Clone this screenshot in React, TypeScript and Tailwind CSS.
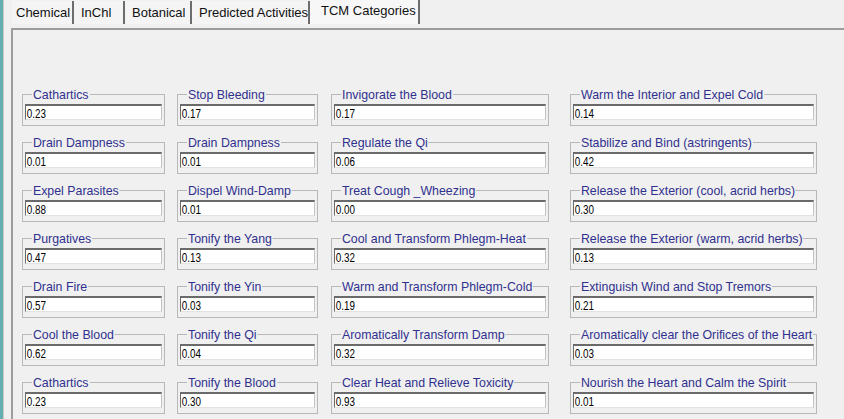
import React from "react";

type Item = { label: string; value: string };

const cols: { w: string; ml: string; items: Item[] }[] = [
  {
    w: "w-[143px]",
    ml: "ml-[9px]",
    items: [
      { label: "Cathartics", value: "0.23" },
      { label: "Drain Dampness", value: "0.01" },
      { label: "Expel Parasites", value: "0.88" },
      { label: "Purgatives", value: "0.47" },
      { label: "Drain Fire", value: "0.57" },
      { label: "Cool the Blood", value: "0.62" },
      { label: "Cathartics", value: "0.23" },
    ],
  },
  {
    w: "w-[141px]",
    ml: "ml-[12px]",
    items: [
      { label: "Stop Bleeding", value: "0.17" },
      { label: "Drain Dampness", value: "0.01" },
      { label: "Dispel Wind-Damp", value: "0.01" },
      { label: "Tonify the Yang", value: "0.13" },
      { label: "Tonify the Yin", value: "0.03" },
      { label: "Tonify the Qi", value: "0.04" },
      { label: "Tonify the Blood", value: "0.30" },
    ],
  },
  {
    w: "w-[218px]",
    ml: "ml-[13px]",
    items: [
      { label: "Invigorate the Blood", value: "0.17" },
      { label: "Regulate the Qi", value: "0.06" },
      { label: "Treat Cough _Wheezing", value: "0.00" },
      { label: "Cool and Transform Phlegm-Heat", value: "0.32" },
      { label: "Warm and Transform Phlegm-Cold", value: "0.19" },
      { label: "Aromatically Transform Damp", value: "0.32" },
      { label: "Clear Heat and Relieve Toxicity", value: "0.93" },
    ],
  },
  {
    w: "w-[247px]",
    ml: "ml-[21px]",
    items: [
      { label: "Warm the Interior and Expel Cold", value: "0.14" },
      { label: "Stabilize and Bind (astringents)", value: "0.42" },
      { label: "Release the Exterior (cool, acrid herbs)", value: "0.30" },
      { label: "Release the Exterior (warm, acrid herbs)", value: "0.13" },
      { label: "Extinguish Wind and Stop Tremors", value: "0.21" },
      { label: "Aromatically clear the Orifices of the Heart", value: "0.03" },
      { label: "Nourish the Heart and Calm the Spirit", value: "0.01" },
    ],
  },
];

function GroupBox({ item, w, ml }: { item: Item; w: string; ml: string }) {
  return (
    <div className={`relative ${w} ${ml} h-[32px] border border-[#b8b8b8] shrink-0`}>
      <div className="absolute left-[9px] top-[-7px] px-[1px] bg-[#f0f0f0] text-[13px] leading-[14px] text-[#30308f] whitespace-nowrap origin-left scale-x-[0.95]">
        {item.label}
      </div>
      <div className="mt-[9px] mx-[2px] h-[16px] bg-white border-t-2 border-t-[#6a6a6a] border-l border-l-[#6a6a6a] border-r border-r-[#c4c4c4] border-b border-b-[#e2e2e2] overflow-hidden">
        <div className="pl-[1px] text-[13px] leading-[15px] text-black origin-left scale-x-[0.76] whitespace-nowrap">
          {item.value}
        </div>
      </div>
    </div>
  );
}

export default function App() {
  const tabs = [
    { label: "Chemical", w: "w-[62px]", pl: "pl-[4px]" },
    { label: "InChl", w: "w-[51px]", pl: "pl-[7px]" },
    { label: "Botanical", w: "w-[67px]", pl: "pl-[7px]" },
    { label: "Predicted Activities", w: "w-[118px]", pl: "pl-[7px]" },
  ];
  return (
    <div
      className="w-[844px] h-[419px] bg-[#f0f0f0] flex overflow-hidden"
      style={{ fontFamily: '"Liberation Sans", Arial, sans-serif' }}
    >
      <div className="w-[3px] h-full bg-[#62aeb0] shrink-0" />
      <div className="w-[1px] h-full bg-[#c9c9c9] shrink-0" />
      <div className="flex-1 flex flex-col pl-[7px]">
        {/* tab strip */}
        <div className="h-[28px] flex items-start shrink-0">
          <div className="w-[1px]" />
          {tabs.map((t) => (
            <div
              key={t.label}
              className={`${t.w} h-[23px] mt-[1px] ${t.pl} flex items-center bg-[#f4f4f4] border-r-2 border-r-[#6d6d6d] text-[13px] text-[#111] whitespace-nowrap`}
            >
              {t.label}
            </div>
          ))}
          <div className="w-[110px] h-[24px] pl-[11px] flex items-start pt-[1px] bg-[#f7f7f7] border-r-2 border-r-[#6d6d6d] text-[13px] text-[#111] whitespace-nowrap">
            TCM Categories
          </div>
        </div>
        {/* panel */}
        <div className="flex-1 border-t-2 border-t-[#9c9c9c] border-l-2 border-l-[#9c9c9c] pt-[64px] flex flex-col gap-[16px]">
          {[0, 1, 2, 3, 4, 5, 6].map((r) => (
            <div key={r} className="flex">
              {cols.map((c, ci) => (
                <GroupBox key={ci} item={c.items[r]} w={c.w} ml={c.ml} />
              ))}
            </div>
          ))}
        </div>
      </div>
    </div>
  );
}
